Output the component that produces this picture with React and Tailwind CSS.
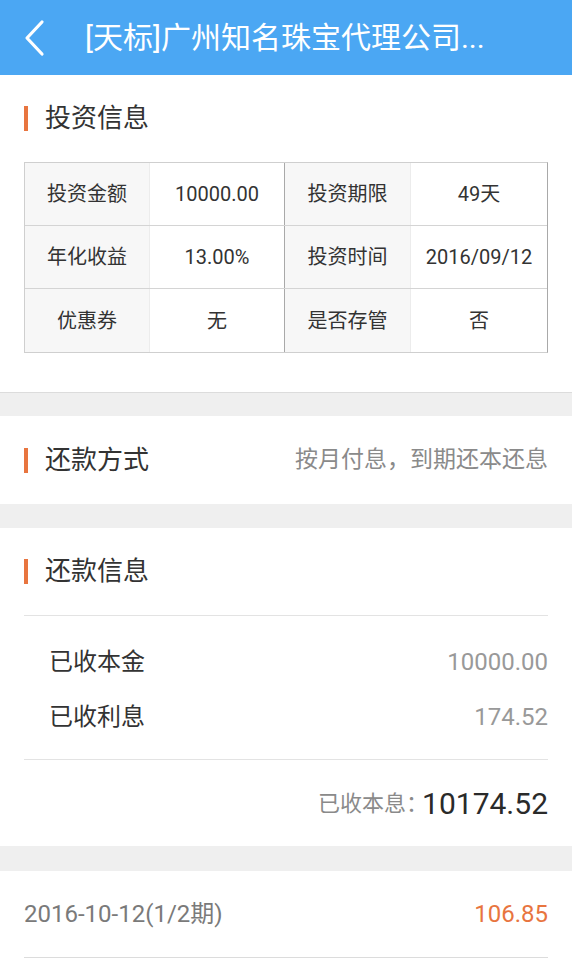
const font = { fontFamily: "Roboto, 'Noto Sans CJK SC', sans-serif" };

function SectionTitle({ children }) {
  return (
    <div className="flex items-center">
      <span className="w-[4px] h-[25px] bg-[#e8753f]" />
      <span className="ml-[17px] text-[26px] text-[#333]">{children}</span>
    </div>
  );
}

const rows = [
  ["投资金额", "10000.00", "投资期限", "49天"],
  ["年化收益", "13.00%", "投资时间", "2016/09/12"],
  ["优惠券", "无", "是否存管", "否"],
];

function InfoTable() {
  return (
    <div className="mx-[24px] border border-[#cfcfcf] border-r-[#a9a9a9] text-[20px] text-[#333]">
      {rows.map((r, i) => (
        <div key={i} className={`flex h-[63px] ${i < rows.length - 1 ? "border-b border-[#d4d4d4]" : ""}`}>
          <div className="w-[125px] flex items-center justify-center bg-[#f7f7f7] border-r border-[#ececec]">{r[0]}</div>
          <div className="w-[135px] flex items-center justify-center bg-white border-r border-[#a9a9a9]">{r[1]}</div>
          <div className="w-[126px] flex items-center justify-center bg-[#f7f7f7] border-r border-[#ececec]">{r[2]}</div>
          <div className="flex-1 flex items-center justify-center bg-white">{r[3]}</div>
        </div>
      ))}
    </div>
  );
}

export default function App() {
  return (
    <div className="w-[572px] min-h-[960px] bg-[#efefef]" style={font}>
      <div className="h-[75px] bg-[#4ba7f3] flex items-center">
        <svg width="22" height="38" viewBox="0 0 22 38" className="ml-[23px]">
          <path d="M19 3 L4 19 L19 35" fill="none" stroke="#fff" strokeWidth="3.2" strokeLinecap="round" strokeLinejoin="round" />
        </svg>
        <span className="ml-[40px] text-[30px] text-white leading-none whitespace-nowrap">[天标]广州知名珠宝代理公司...</span>
      </div>

      <div className="bg-white border-b border-[#dcdcdc] pb-[39px]">
        <div className="h-[87px] flex items-center pl-[24px]">
          <SectionTitle>投资信息</SectionTitle>
        </div>
        <InfoTable />
      </div>

      <div className="mt-[23px] h-[88px] bg-white flex items-center justify-between px-[24px]">
        <SectionTitle>还款方式</SectionTitle>
        <span className="text-[23px] text-[#8a8a8a]">按月付息，到期还本还息</span>
      </div>

      <div className="mt-[24px] bg-white">
        <div className="h-[87px] flex items-center pl-[24px]">
          <SectionTitle>还款信息</SectionTitle>
        </div>
        <div className="mx-[24px] border-t border-[#e3e3e3] pt-[18px] pb-[15px]">
          <div className="h-[55px] flex items-center justify-between pl-[25px]">
            <span className="text-[24px] text-[#333]">已收本金</span>
            <span className="text-[24px] text-[#999]">10000.00</span>
          </div>
          <div className="h-[55px] flex items-center justify-between pl-[25px]">
            <span className="text-[24px] text-[#333]">已收利息</span>
            <span className="text-[24px] text-[#999]">174.52</span>
          </div>
        </div>
        <div className="mx-[24px] border-t border-[#e3e3e3] h-[87px] flex items-center justify-end">
          <span className="text-[22px] text-[#8a8a8a]">已收本息：</span>
          <span className="text-[30px] text-[#2a2a2a] -ml-[6px]">10174.52</span>
        </div>
      </div>

      <div className="mt-[25px] bg-white pb-[3px]">
        <div className="mx-[24px] h-[87px] border-b border-[#dcdcdc] flex items-center justify-between">
          <span className="text-[24px] text-[#7a7a7a]">2016-10-12(1/2期)</span>
          <span className="text-[24px] text-[#e8753f]">106.85</span>
        </div>
      </div>
    </div>
  );
}
